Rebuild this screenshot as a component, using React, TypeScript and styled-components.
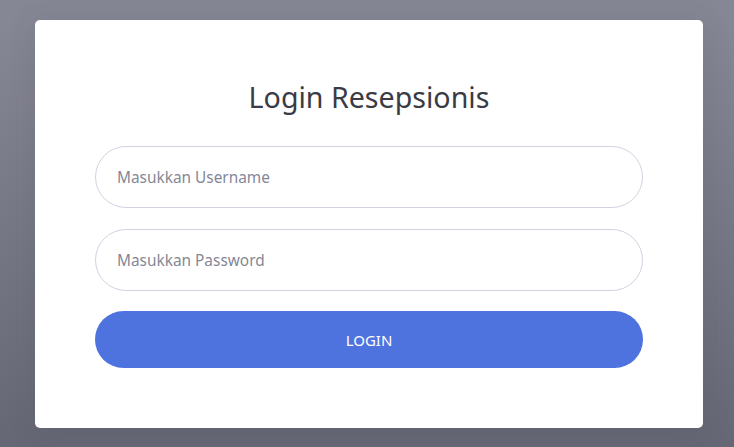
import React from "react";
import styled, { createGlobalStyle } from "styled-components";

const Global = createGlobalStyle`
  html, body { margin: 0; padding: 0; }
  body {
    font-family: "Noto Sans", "Open Sans", sans-serif;
    background: linear-gradient(180deg, #868795 5%, #666775 100%);
    min-height: 100vh;
  }
`;

const Page = styled.div`
  min-height: 100vh;
  box-sizing: border-box;
  padding: 20px 31px 0 35px;
`;

const Card = styled.div`
  background: #fff;
  border-radius: 5px;
  box-shadow: 0 2px 28px 0 rgba(58, 59, 69, 0.15);
  padding: 60px 60px 60px;
  height: 408px;
  box-sizing: border-box;
  display: flex;
  flex-direction: column;
`;

const Title = styled.h1`
  margin: 0 0 32px;
  text-align: center;
  font-weight: 400;
  font-size: 28.6px;
  line-height: 34px;
  color: #3a3b45;
`;

const Form = styled.form`
  display: flex;
  flex-direction: column;
`;

const Input = styled.input<{ $gapBelow: number }>`
  height: 62px;
  margin-bottom: ${(p) => p.$gapBelow}px;
  box-sizing: border-box;
  border: 1px solid #d1d3e2;
  border-radius: 31px;
  padding: 0 21px;
  font-family: inherit;
  font-size: 15.4px;
  color: #6e707e;
  outline: none;
  &::placeholder {
    color: #858796;
  }
`;

const Button = styled.button`
  height: 57px;
  border: none;
  border-radius: 29px;
  background: #4e73df;
  color: #fff;
  font-family: inherit;
  font-size: 15px;
  cursor: pointer;
`;

export default function App() {
  return (
    <>
      <Global />
      <Page>
        <Card>
          <Title>Login Resepsionis</Title>
          <Form onSubmit={(e) => e.preventDefault()}>
            <Input $gapBelow={21} type="text" placeholder="Masukkan Username" />
            <Input $gapBelow={20} type="password" placeholder="Masukkan Password" />
            <Button type="submit">LOGIN</Button>
          </Form>
        </Card>
      </Page>
    </>
  );
}
